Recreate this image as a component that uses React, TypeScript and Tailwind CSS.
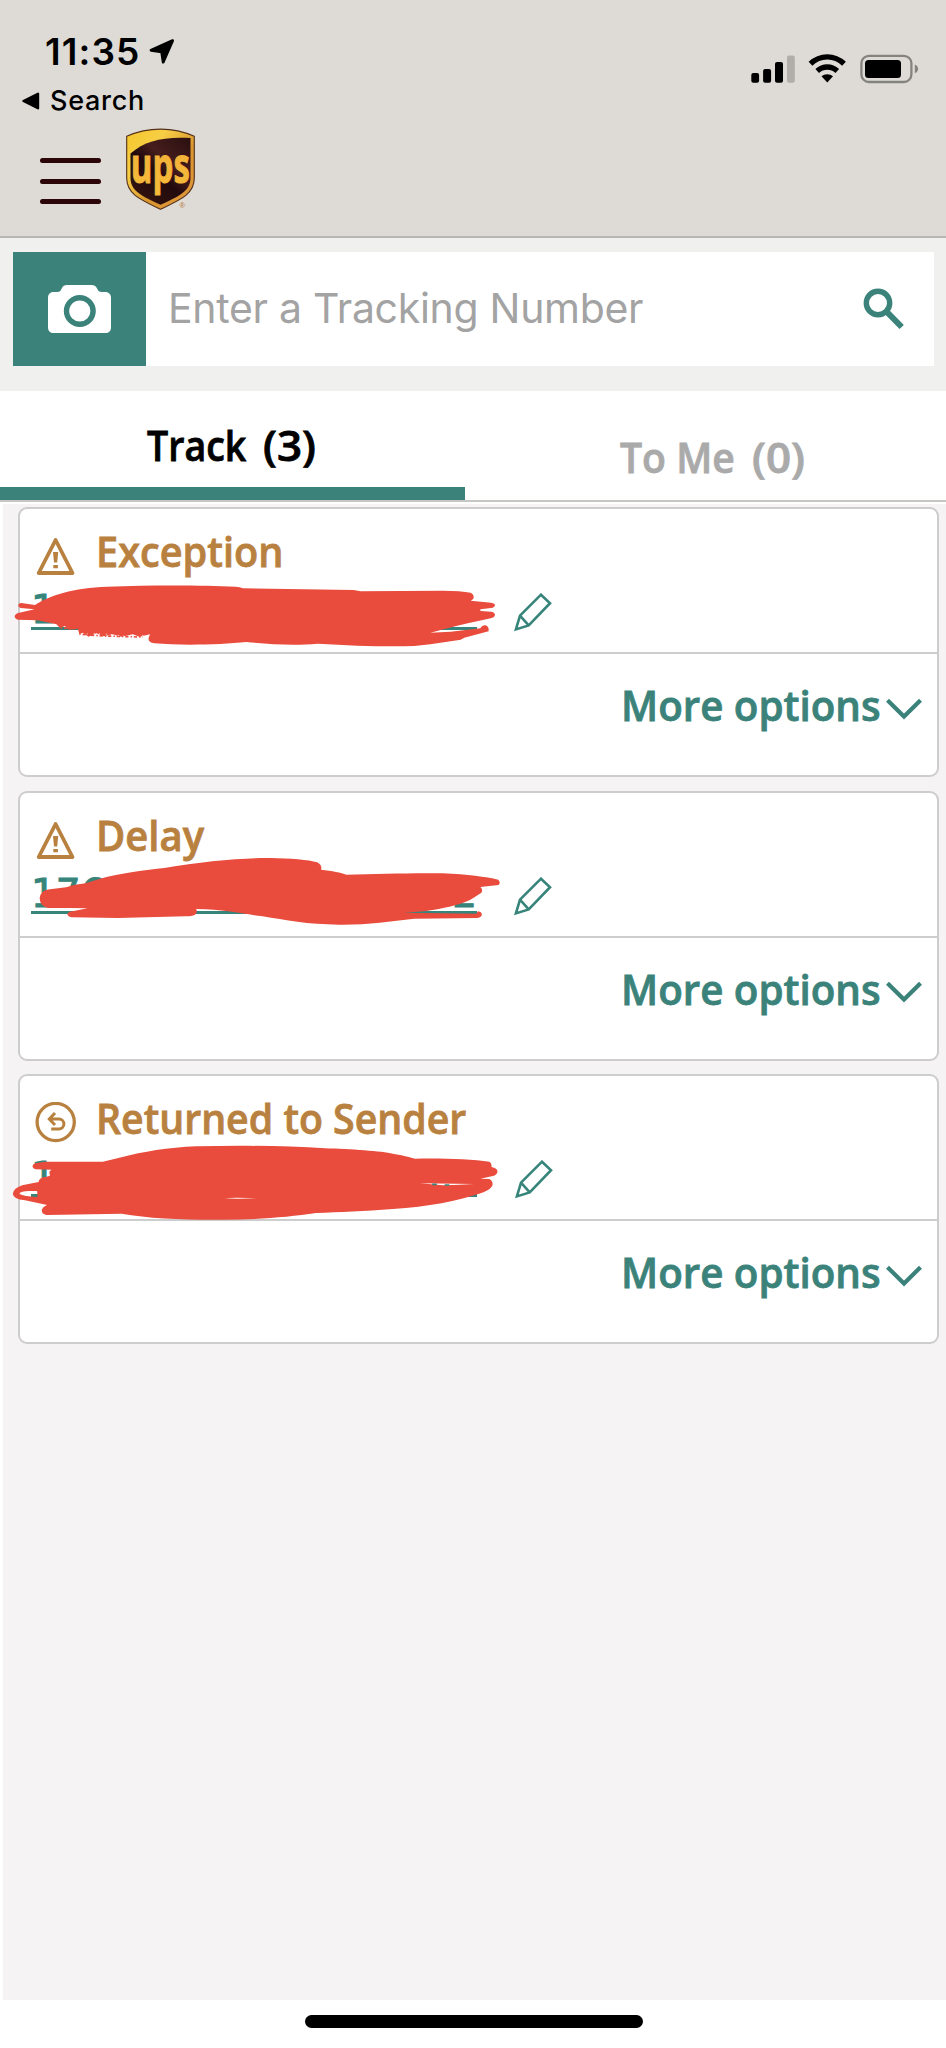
import React from 'react';

interface Shipment {
  status: string;
  statusClass: string;
  icon: 'warning' | 'returned';
  firstDigits: string;
  lastDigits: string;
  pencilClass: string;
  scribble: React.ReactNode;
}

const LocationIcon = () => (
  <svg className="block" width="26" height="26" viewBox="0 0 26 26">
    <path d="M23.6 1.6 L2 11.3 L12.6 12.8 L14.2 23.2 Z" fill="#000" stroke="#000" strokeWidth="2.8" strokeLinejoin="round" />
  </svg>
);

const BackIcon = () => (
  <svg className="block" width="18" height="18" viewBox="0 0 18 18">
    <path d="M1.5 9 L16 1.8 V16.2 Z" fill="#000" stroke="#000" strokeWidth="2.4" strokeLinejoin="round" />
  </svg>
);

const DeviceStatus = () => (
  <svg className="block" width="170" height="34" viewBox="0 0 170 34">
    {/* Signal */}
    <rect x="1.3" y="23" width="7.8" height="9.8" rx="2" />
    <rect x="13.1" y="19" width="8" height="13.8" rx="2" />
    <rect x="25" y="12" width="8" height="20.8" rx="2" />
    <rect x="37" y="5.6" width="7.8" height="27.2" rx="2" fill="#b1aeaa" />
    {/* Wifi */}
    <g fill="none" stroke="#000" strokeWidth="5.4">
      <path d="M60.5 13.8 C70 4.6 84.5 4.6 94 13.8" />
      <path d="M67.2 21 C73 15.7 81.5 15.7 87.3 21" />
    </g>
    <path d="M71.5 26.3 C74.5 23.4 80 23.4 83 26.3 L77.25 32.5 Z" />
    {/* Battery */}
    <rect x="111.4" y="5.8" width="50" height="26.2" rx="7.5" fill="none" stroke="#85837f" strokeWidth="2.3" />
    <rect x="115" y="10" width="36" height="18" rx="3.5" />
    <path d="M164.8 14.5 C169.2 16 169.2 22 164.8 23.3 Z" fill="#85837f" />
  </svg>
);

const UpsLogo = () => (
  <svg className="block overflow-visible" width="72" height="84" viewBox="0 0 72 84">
    <defs>
      <linearGradient id="gold" x1="0" y1="0" x2="1" y2="1">
        <stop offset="0" stopColor="#f6c72b" />
        <stop offset="0.3" stopColor="#f7cf45" />
        <stop offset="0.6" stopColor="#d9962f" />
        <stop offset="1" stopColor="#e0953c" />
      </linearGradient>
      <linearGradient id="brown" x1="1" y1="0" x2="0.2" y2="1">
        <stop offset="0" stopColor="#2a0f10" />
        <stop offset="0.4" stopColor="#461d1d" />
        <stop offset="0.6" stopColor="#210a0d" />
        <stop offset="1" stopColor="#35140f" />
      </linearGradient>
      <linearGradient id="letters" x1="0" y1="0" x2="0" y2="1">
        <stop offset="0" stopColor="#f2ab38" />
        <stop offset="1" stopColor="#f5be3a" />
      </linearGradient>
    </defs>
    <path d="M0.7 8.3 C22 -1.3 47 -1.3 68.3 8.3 V50 C68.3 66 55 71.5 34.5 81.2 C14 71.5 0.7 66 0.7 50 Z" fill="url(#gold)" stroke="#54301c" strokeWidth="1.1" />
    <path d="M4.5 25.5 C19 12.5 38 8.5 64.5 10 V50 C64.5 63 53 68.3 34.5 76.8 C16 68.3 4.5 63 4.5 50 Z" fill="url(#brown)" />
    <text x="4.8" y="54.5" textLength="59" lengthAdjust="spacingAndGlyphs" fontFamily="Open Sans, sans-serif" fontWeight="700" fontSize="51" fill="url(#letters)" stroke="#f3b43a" strokeWidth="1">ups</text>
    <text x="53.5" y="80" fontFamily="Liberation Sans, sans-serif" fontSize="7.5" fill="#b5712f">®</text>
  </svg>
);

const CameraIcon = () => (
  <svg className="block" width="63" height="48" viewBox="0 0 63 48">
    <path d="M5.5 7 H9 C12 7 12.5 6 13.5 3.8 C14.8 1 16.5 0 19 0 H43.5 C46 0 48 1 49.2 3.8 C50.2 6 51 7 54 7 H57 C61 7 63 9.5 63 13 V42 C63 46 61 48 57 48 H6 C2 48 0 46 0 42 V13 C0 9.5 2 7 5.5 7 Z" fill="#fff" />
    <circle cx="31.8" cy="26" r="13.3" fill="none" stroke="#3b837a" strokeWidth="5.4" />
  </svg>
);

const SearchIcon = () => (
  <svg className="block" width="42" height="42" viewBox="0 0 42 42">
    <g fill="none" stroke="#3b837a">
      <circle cx="15" cy="15" r="11.7" strokeWidth="5.4" />
      <path d="M22.8 22.8 L38.7 39" strokeWidth="6" />
    </g>
  </svg>
);

const WarningIcon = () => (
  <svg className="block" width="44" height="42" viewBox="0 0 44 42">
    <path d="M21.6 5 L38.5 38 H4.7 Z" fill="none" stroke="#b9813f" strokeWidth="3.8" strokeLinejoin="round" />
    <path d="M19 17 h5.2 l-1 10.5 h-3.2 z M19.3 30 h4.6 v3.2 h-4.6 z" fill="#b9813f" />
  </svg>
);

const ReturnIcon = () => (
  <svg className="block" width="44" height="42" viewBox="0 0 44 42">
    <circle cx="21.7" cy="20" r="18.6" fill="none" stroke="#b9813f" strokeWidth="3.3" />
    <path d="M21 11 L15.3 17.1 L21 23 M15.8 17.1 H25 a4.9 4.9 0 0 1 0 9.8 H17.2" fill="none" stroke="#b9813f" strokeWidth="3" />
  </svg>
);

const PencilIcon = () => (
  <svg className="block" width="38" height="40" viewBox="0 0 38 40">
    <path d="M1.9 36.4 L6 22.6 L27 1.7 L36 10.2 L14.7 32.4 Z M6 22.6 L14.7 32.4" fill="none" stroke="#37847a" strokeWidth="2.6" />
  </svg>
);

const ChevronIcon = () => (
  <svg className="block" width="36" height="23" viewBox="0 0 36 23">
    <path d="M1.5 2.2 L18 18.5 L34.5 2.2" fill="none" stroke="#3b837a" strokeWidth="4.2" />
  </svg>
);

// Marker strokes that hide the tracking numbers
const ScribbleOne = () => (
  <svg className="absolute -top-[9px] -left-[20px]" width="560" height="160" viewBox="0 0 1568 480" preserveAspectRatio="none">
    <path
      d="M60 309 L98 315 C140 285 205 264 300 260 C420 255 560 255 660 260 Q672 261 680 265 L990 270 L1010 274 L1240 272 Q1290 272 1318 278 Q1330 284 1325 297 L1318 302 L1375 308 Q1386 310 1386 316 Q1385 323 1375 324 L1345 328 V333 L1376 335 Q1386 337 1386 345 Q1384 353 1374 355 L1310 370 L1280 377 L1205 398 L1262 395 L1345 385 Q1350 375 1360 376 Q1370 381 1368 394 L1300 413 L1290 419 L1205 433 L1160 438 C1080 441 990 437 890 431 C820 437 760 433 690 426 C620 434 510 437 432 430 Q414 427 416 414 L420 403 L390 410 L372 403 L340 410 L315 403 L290 409 L270 400 L248 410 L232 398 L222 402 L218 386 L192 389 L182 378 L168 384 L158 373 L105 361 L50 359 Q41 356 41 348 Q43 340 54 338 L97 328 L58 324 Q51 322 51 316 Q52 309 60 309 Z"
      fill="#e94b3c"
    />
    <path d="M170 384 L218 386 M222 402 L250 405 L290 408 L400 411" fill="none" stroke="#e94b3c" strokeWidth="5" strokeDasharray="4 5 9 6" />
    <path d="M228 402 L285 401 L345 408 L402 407" fill="none" stroke="#fff" strokeWidth="2" strokeDasharray="4 11 3 16" />
  </svg>
);

const ScribbleTwo = () => (
  <svg className="absolute -top-[12.500px] -left-[20px]" width="560" height="170" viewBox="0 0 1568 510" preserveAspectRatio="none">
    <path
      d="M140 328 L185 322 L210 314 L240 310 L280 296 C335 280 410 270 460 264 C570 243 680 233 760 234 C810 235 865 239 888 247 Q903 256 899 269 C930 272 955 278 970 284 C1060 282 1160 278 1240 280 C1310 283 1360 291 1395 299 Q1403 307 1396 315 L1345 321 Q1353 328 1348 338 L1338 345 C1310 367 1280 378 1190 394 L1130 398 L1334 401 L1338 394 Q1350 396 1349 405 Q1347 413 1335 414 L1160 416 C1090 424 1030 435 950 434 C860 434 800 420 735 409 C670 400 630 388 549 387 Q555 398 545 405 Q538 409 520 409 L330 414 L200 412 Q188 409 189 402 Q191 395 203 394 L245 385 L195 384 L135 384 Q112 379 111 355 Q114 330 140 328 Z"
      fill="#e94b3c"
    />
  </svg>
);

const ScribbleThree = () => (
  <svg className="absolute -top-[16px] -left-[20px]" width="560" height="190" viewBox="0 0 1568 570" preserveAspectRatio="none">
    <path
      fillRule="evenodd"
      d="M100 310 L125 305 L288 305 L340 292 C400 275 470 263 550 259 C670 256 800 257 910 265 C980 267 1070 274 1100 281 C1130 286 1150 292 1162 296 C1230 294 1320 297 1370 305 Q1378 309 1376 321 Q1393 324 1393 335 Q1391 345 1380 348 L1345 356 L1370 357 Q1381 363 1379 376 Q1375 389 1350 398 C1280 424 1200 439 1100 447 C1020 454 950 456 885 459 C810 471 720 479 630 479 C520 480 420 476 340 461 L130 465 Q116 462 117 450 Q120 440 132 435 L70 421 Q36 416 36 401 Q38 385 62 376 L108 366 Q109 352 130 350 L140 347 L138 335 L144 329 L100 328 Q91 325 91 318 Q93 311 100 310 Z M54 401 Q58 393 82 393 L104 393 L105 411 Q60 408 54 401 Z M628 415 Q650 412 718 415 Q660 417 628 415 Z M1175 370 L1328 372 L1270 375 L1240 376 Z"
      fill="#e94b3c"
    />
    <path d="M1210 373 H1223 M1245 375 H1258" stroke="#37847a" strokeWidth="5" />
  </svg>
);

const shipments: Shipment[] = [
  {
    status: 'Exception',
    statusClass: 'scale-x-[0.968]',
    icon: 'warning',
    firstDigits: '1',
    lastDigits: '',
    pencilClass: 'ml-[37px]',
    scribble: <ScribbleOne />,
  },
  {
    status: 'Delay',
    statusClass: 'scale-x-[0.975]',
    icon: 'warning',
    firstDigits: '176',
    lastDigits: '2',
    pencilClass: 'ml-[37px]',
    scribble: <ScribbleTwo />,
  },
  {
    status: 'Returned to Sender',
    statusClass: 'scale-x-[0.958]',
    icon: 'returned',
    firstDigits: '1',
    lastDigits: '',
    pencilClass: 'ml-[38px]',
    scribble: <ScribbleThree />,
  },
];

const ShipmentCard = ({ shipment }: { shipment: Shipment }) => (
  <section className="relative h-[270px] shrink-0 rounded-[9px] border-2 border-[#cdcdcd] bg-white">
    <div className="h-[145px] border-b-2 border-[#cdcdcd] pt-[26px] pl-[14px]">
      <div className="flex h-[54px]">
        {shipment.icon === 'warning' ? <WarningIcon /> : <ReturnIcon />}
        <h2 className={`-mt-[4px] ml-[18px] origin-left text-[41px] leading-[40px] font-semibold whitespace-nowrap text-[#b9813f] [-webkit-text-stroke:0.8px] ${shipment.statusClass}`}>
          {shipment.status}
        </h2>
      </div>
      <div className="-ml-[3px] flex">
        <div className="flex h-[41px] w-[446px] justify-between border-b-[3px] border-[#37847a] font-['DejaVu_Sans',sans-serif] text-[39px] leading-[42px] text-[#37847a] [-webkit-text-stroke:1px]">
          <span>{shipment.firstDigits}</span>
          <span>{shipment.lastDigits}</span>
        </div>
        <button className={`mt-[4px] ${shipment.pencilClass}`}>
          <PencilIcon />
        </button>
      </div>
    </div>
    <button className="ml-[601px] flex items-center pt-[26px]">
      <span className="w-[265px] origin-left scale-x-[0.983] text-left text-[41px] leading-[50px] font-semibold whitespace-nowrap text-[#3b837a] [-webkit-text-stroke:0.8px]">
        More options
      </span>
      <span className="pt-[8px]">
        <ChevronIcon />
      </span>
    </button>
    {shipment.scribble}
  </section>
);

export default function App() {
  return (
    <div className="flex h-[2048px] w-[946px] flex-col overflow-hidden bg-white font-['Open_Sans',sans-serif]">
      <header className="h-[238px] border-b-2 border-[#b9b6b2] bg-[#dedbd6] font-['Inter',sans-serif] text-black">
        <div className="flex h-[120px] justify-between pr-[26px]">
          <div className="pt-[30px]">
            <div className="ml-[45px] flex h-[44px] items-center">
              <span className="w-[104px] text-[37px] leading-[44px] font-semibold tracking-[1.1px]">11:35</span>
              <LocationIcon />
            </div>
            <div className="mt-[10px] ml-[22px] flex h-[34px] items-center">
              <BackIcon />
              <span className="ml-[10px] text-[27px] leading-[34px] font-medium tracking-[0.7px]">Search</span>
            </div>
          </div>
          <div className="w-[170px] pt-[50px]">
            <DeviceStatus />
          </div>
        </div>
        <div className="flex pl-[40px]">
          <button className="mt-[38px] flex h-[46px] w-[61px] flex-col justify-between">
            <span className="block h-[5px] w-full rounded-full bg-[#2c0508]" />
            <span className="block h-[5px] w-full rounded-full bg-[#2c0508]" />
            <span className="block h-[5px] w-full rounded-full bg-[#2c0508]" />
          </button>
          <div className="mt-[8px] ml-[25px]">
            <UpsLogo />
          </div>
        </div>
      </header>

      {/* Tracking number search */}
      <div className="h-[153px] bg-[#f0f0ee] px-[13px] pt-[14px]">
        <div className="flex h-[114px] w-[921px] items-center bg-white">
          <button className="flex h-full w-[133px] items-center justify-center bg-[#3b837a]">
            <CameraIcon />
          </button>
          <span className="ml-[22px] flex-1 font-['Inter',sans-serif] text-[41px] tracking-[-0.300px] whitespace-nowrap text-[#a3a3a3]">
            Enter a Tracking Number
          </span>
          <button className="mr-[29px]">
            <SearchIcon />
          </button>
        </div>
      </div>

      {/* Tabs */}
      <nav className="flex h-[111px] border-b-2 border-[#c8c6c3] text-[41px] leading-[50px] font-semibold whitespace-nowrap [-webkit-text-stroke:0.8px]">
        <button className="flex w-[465px] border-b-[13px] border-[#3b837a] pt-[29px] pl-[147px] text-black">
          <span className="w-[116px] origin-left scale-x-[0.915] text-left">Track</span>
          <span className="origin-left scale-x-[1.07]">(3)</span>
        </button>
        <button className="flex flex-1 pt-[41px] pl-[155px] text-[#aaaaaa]">
          <span className="w-[132px] origin-left scale-x-[0.955] text-left">To Me</span>
          <span className="origin-left scale-x-[1.07]">(0)</span>
        </button>
      </nav>

      <main className="mt-[2px] ml-[3px] flex h-[1496px] flex-col gap-[13.500px] bg-[#f5f3f4] pt-[3px] pr-[7px] pl-[15px]">
        {shipments.map((shipment) => (
          <ShipmentCard key={shipment.status} shipment={shipment} />
        ))}
      </main>

      <div className="mt-[15px] ml-[305px] h-[13px] w-[338px] rounded-full bg-black" />
    </div>
  );
}
